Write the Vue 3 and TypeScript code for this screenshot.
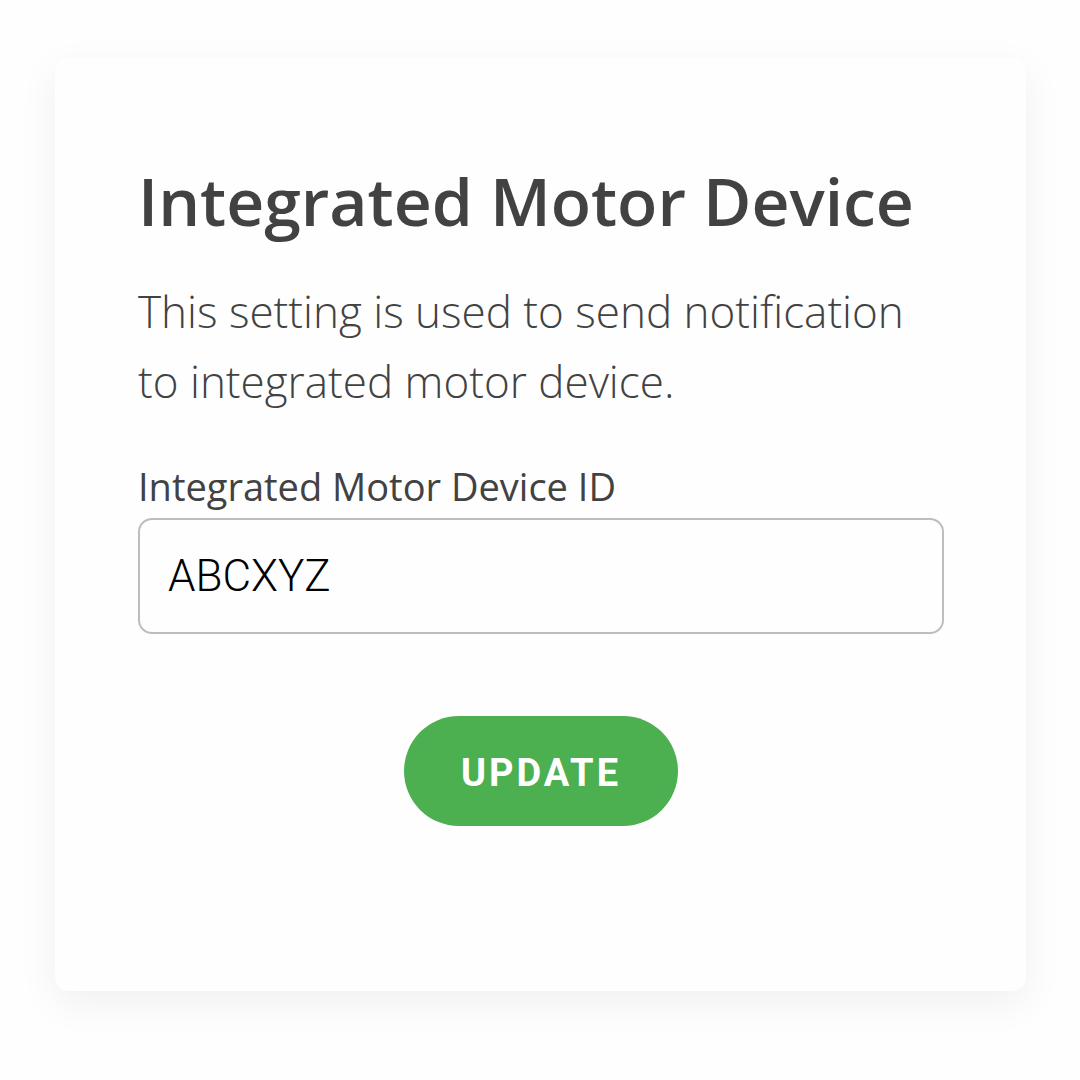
<script setup lang="ts">
import { ref } from 'vue'

const deviceId = ref('ABCXYZ')
const saved = ref('ABCXYZ')

function update(): void {
  saved.value = deviceId.value
}
</script>

<template>
  <main class="page">
    <form class="card" @submit.prevent="update">
      <h1 class="title">Integrated Motor Device</h1>
      <p class="description">This setting is used to send notification to integrated motor device.</p>
      <label class="label" for="device-id">Integrated Motor Device ID</label>
      <input id="device-id" v-model="deviceId" class="field" type="text" />
      <button class="submit" type="submit">UPDATE</button>
    </form>
  </main>
</template>

<style>
body {
  margin: 0;
  background: #fefefe;
}
</style>

<style scoped>
.page {
  padding: 58px 54px 88px 55px;
  font-family: "Open Sans", sans-serif;
  color: #424242;
}

.card {
  display: flex;
  flex-direction: column;
  padding: 100px 82px 165px 83px;
  border-radius: 14px;
  background: #fefefe;
  box-shadow: 0 12px 40px rgba(0, 0, 0, 0.06);
}

.title {
  margin: 0;
  font-size: 66px;
  line-height: 84px;
  font-weight: 600;
}

.description {
  margin: 34px 0 0;
  font-size: 44px;
  line-height: 70px;
  font-weight: 300;
}

.label {
  margin: 42px 0 4px;
  font-size: 38px;
  line-height: 56px;
}

.field {
  box-sizing: border-box;
  width: 100%;
  height: 116px;
  padding: 0 28px;
  border: 2px solid #bdbdbd;
  border-radius: 14px;
  background: #fefefe;
  color: #000;
  font-family: Roboto, sans-serif;
  font-size: 44px;
  font-weight: 300;
  outline: none;
}

.submit {
  align-self: center;
  height: 110px;
  margin-top: 82px;
  padding: 4px 57px 0;
  border: 0;
  border-radius: 55px;
  background: #4caf50;
  color: #fff;
  font-family: Roboto, sans-serif;
  font-size: 38px;
  font-weight: 700;
  letter-spacing: 3px;
  cursor: pointer;
}
</style>
